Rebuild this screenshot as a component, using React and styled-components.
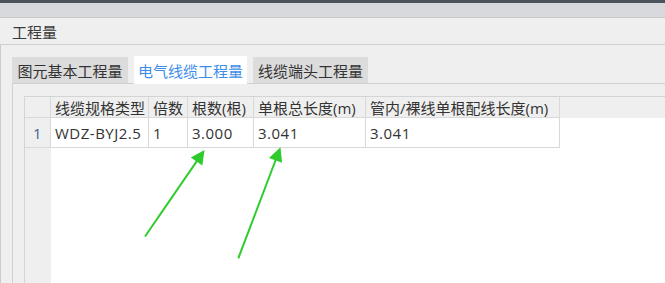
import React from "react";
import styled, { createGlobalStyle } from "styled-components";

const Global = createGlobalStyle`
  html, body { margin: 0; padding: 0; background: #efefef; }
  body { font-family: "Open Sans", "Noto Sans CJK SC", sans-serif; }
`;

const Page = styled.div`
  position: relative;
  width: 665px;
  height: 283px;
  overflow: hidden;
  display: flex;
  flex-direction: column;
  background: #efefef;
  color: #333;
  font-size: 15px;
`;

const TopBar = styled.div`
  height: 3px;
  background: #4b535c;
  flex: none;
`;

const SubBar = styled.div`
  height: 14px;
  background: #d8d9dc;
  border-bottom: 1px solid #c8c9cb;
  flex: none;
`;

const TitleBar = styled.div`
  height: 26px;
  display: flex;
  align-items: center;
  padding-left: 12px;
  border-bottom: 1px solid #d0d0d0;
  color: #3a3a3a;
  flex: none;
`;

const Body = styled.div`
  flex: 1;
  display: flex;
  flex-direction: column;
  border-left: 1px solid #cbcbcb;
  padding: 12px 0 0 11px;
  min-height: 0;
`;

const TabStrip = styled.div`
  display: flex;
  gap: 6px;
  height: 26px;
  flex: none;
`;

const Tab = styled.div`
  display: flex;
  align-items: center;
  justify-content: center;
  width: ${(p) => p.$w}px;
  height: ${(p) => (p.$active ? 28 : 26)}px;
  margin-top: ${(p) => (p.$active ? -1 : 0)}px;
  position: relative;
  z-index: ${(p) => (p.$active ? 1 : 0)};
  background: ${(p) => (p.$active ? "#ffffff" : "#dcdcdc")};
  color: ${(p) => (p.$active ? "#3d8ee8" : "#333333")};
  white-space: nowrap;
`;

const Panel = styled.div`
  flex: 1;
  display: flex;
  flex-direction: column;
  border-top: 1px solid #d0d0d0;
  border-left: 1px solid #d0d0d0;
  padding: 12px 0 0 11px;
  min-height: 0;
`;

const Grid = styled.div`
  flex: 1;
  display: flex;
  flex-direction: column;
  border-left: 1px solid #d4d4d4;
  border-top: 1px solid #d4d4d4;
  background: #ffffff;
`;

const Row = styled.div`
  display: flex;
  height: ${(p) => p.$h}px;
  flex: none;
  background: ${(p) => (p.$head ? "#efefef" : "#ffffff")};
  letter-spacing: ${(p) => (p.$head ? "0" : "0.5px")};
`;

const Cell = styled.div`
  box-sizing: border-box;
  width: ${(p) => p.$w}px;
  flex: none;
  height: 100%;
  display: flex;
  align-items: center;
  justify-content: ${(p) => (p.$center ? "center" : "flex-start")};
  padding: ${(p) => (p.$center ? "0" : "0 0 0 4px")};
  border-right: 1px solid #d9d9d9;
  border-bottom: 1px solid #d9d9d9;
  background: ${(p) => (p.$head ? "#efefef" : "#ffffff")};
  color: ${(p) => (p.$num ? "#42628f" : "#333333")};
  white-space: nowrap;
  overflow: hidden;
`;

const Filler = styled.div`
  flex: 1;
  background: ${(p) => (p.$head ? "#efefef" : "#ffffff")};
`;

const Rest = styled.div`
  flex: 1;
  display: flex;
`;

const RowHeadStrip = styled.div`
  width: 26px;
  flex: none;
  background: #efefef;
`;

const Overlay = styled.svg`
  position: absolute;
  left: 0;
  top: 0;
  pointer-events: none;
`;

const cols = [
  { w: 98, title: "线缆规格类型", v: "WDZ-BYJ2.5" },
  { w: 39, title: "倍数", v: "1" },
  { w: 66, title: "根数(根)", v: "3.000" },
  { w: 112, title: "单根总长度(m)", v: "3.041" },
  { w: 194, title: "管内/裸线单根配线长度(m)", v: "3.041" },
];

const tabs = [
  { label: "图元基本工程量", w: 116 },
  { label: "电气线缆工程量", w: 113, active: true },
  { label: "线缆端头工程量", w: 115 },
];

function Arrow({ tail, tip, head }) {
  const [tx, ty] = tail;
  const [px, py] = tip;
  const dx = px - tx;
  const dy = py - ty;
  const len = Math.hypot(dx, dy);
  const ux = dx / len;
  const uy = dy / len;
  const bx = px - ux * head;
  const by = py - uy * head;
  const w = head * 0.5;
  const c1 = [bx - uy * w, by + ux * w];
  const c2 = [bx + uy * w, by - ux * w];
  return (
    <g>
      <line x1={tx} y1={ty} x2={bx + ux * 2} y2={by + uy * 2} stroke="#2ecb2c" strokeWidth="2" />
      <polygon points={`${px},${py} ${c1[0]},${c1[1]} ${c2[0]},${c2[1]}`} fill="#2ecb2c" />
    </g>
  );
}

export default function App() {
  return (
    <>
      <Global />
      <Page>
        <TopBar />
        <SubBar />
        <TitleBar>工程量</TitleBar>
        <Body>
          <TabStrip>
            {tabs.map((t) => (
              <Tab key={t.label} $w={t.w} $active={t.active}>
                {t.label}
              </Tab>
            ))}
          </TabStrip>
          <Panel>
            <Grid>
              <Row $h={21} $head>
                <Cell $w={26} $head $center />
                {cols.map((c) => (
                  <Cell key={c.title} $w={c.w} $head>
                    {c.title}
                  </Cell>
                ))}
                <Filler $head />
              </Row>
              <Row $h={30}>
                <Cell $w={26} $head $center $num>
                  1
                </Cell>
                {cols.map((c) => (
                  <Cell key={c.title} $w={c.w}>
                    {c.v}
                  </Cell>
                ))}
                <Filler />
              </Row>
              <Rest>
                <RowHeadStrip />
                <Filler />
              </Rest>
            </Grid>
          </Panel>
        </Body>
        <Overlay width="665" height="283" viewBox="0 0 665 283">
          <Arrow tail={[145, 236.5]} tip={[204.5, 150]} head={14} />
          <Arrow tail={[238.3, 258.3]} tip={[280.5, 147.3]} head={14} />
        </Overlay>
      </Page>
    </>
  );
}
